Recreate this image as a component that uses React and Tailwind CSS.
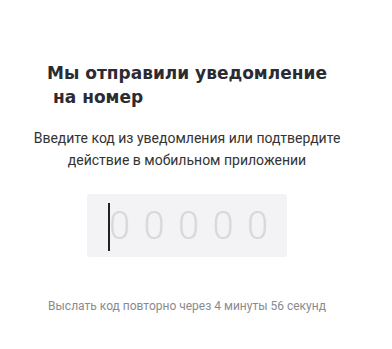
export default function App() {
  const digits = [0, 1, 2, 3, 4];

  return (
    <div className="w-[392px] h-[349px] bg-white overflow-hidden">
      <div className="w-[374px]">
        {/* Heading */}
        <h1
          className="pt-[61px] pl-[47px] text-[17px] leading-[24px] font-bold text-[#2b2b33]"
          style={{ fontFamily: '"DejaVu Sans", "Noto Sans", sans-serif' }}
        >
          <span className="block">Мы отправили уведомление</span>
          <span className="block pl-[6px]">на номер</span>
        </h1>

        {/* Description */}
        <p
          className="mt-[18px] text-center text-[14px] leading-[22px] text-[#333]"
          style={{ fontFamily: 'Roboto, "Liberation Sans", sans-serif' }}
        >
          Введите код из уведомления или подтвердите
          <br />
          действие в мобильном приложении
        </p>

        {/* Code input */}
        <div className="mt-[23px] flex justify-center">
          <div className="relative w-[200px] h-[63px] bg-[#f3f3f5] rounded-[2px] flex items-center pl-[22px] gap-[16px]">
            <div className="absolute left-[21px] top-[9px] w-[2px] h-[48px] bg-[#222]" />
            {digits.map((d) => (
              <span
                key={d}
                className="w-[18.5px] text-center text-[38px] leading-none font-light text-[#d8d8da]"
                style={{ fontFamily: 'Roboto, "Liberation Sans", sans-serif' }}
              >
                0
              </span>
            ))}
          </div>
        </div>

        {/* Resend */}
        <p
          className="mt-[40px] text-center text-[12px] text-[#8a8a8e]"
          style={{ fontFamily: 'Roboto, "Liberation Sans", sans-serif' }}
        >
          Выслать код повторно через 4 минуты 56 секунд
        </p>
      </div>
    </div>
  );
}
